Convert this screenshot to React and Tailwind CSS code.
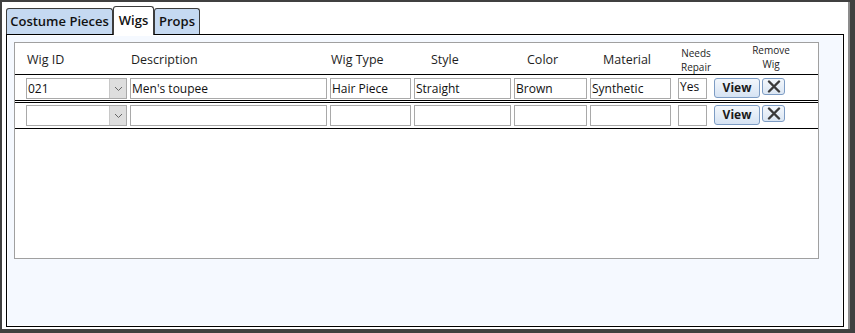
import React from "react";

const font = "font-['Open_Sans','Noto_Sans',sans-serif]";

function Field({ w, ml, value, top }) {
  return (
    <div
      className={`h-[21px] border border-[#a9a9a9] bg-white text-[12px] text-[#111] pl-[1px] overflow-hidden whitespace-nowrap ${
        top ? "leading-[15px]" : "leading-[19px]"
      }`}
      style={{ width: w, marginLeft: ml }}
    >
      {value}
    </div>
  );
}

function Combo({ value }) {
  return (
    <div className="flex h-[21px] w-[101px] border border-[#a9a9a9] bg-white">
      <div className="flex-1 pl-[1px] text-[12px] leading-[19px] text-[#111]">
        {value}
      </div>
      <div className="flex w-[17px] items-center justify-center border-l border-[#c8c8c8] bg-[#dedede]">
        <svg width="9" height="6" viewBox="0 0 9 6">
          <polyline
            points="1,1 4.5,4.5 8,1"
            fill="none"
            stroke="#666"
            strokeWidth="1"
          />
        </svg>
      </div>
    </div>
  );
}

function ViewButton() {
  return (
    <button
      type="button"
      className="ml-[7px] h-[20px] w-[46px] rounded-[3px] border border-[#7d9cc4] bg-gradient-to-b from-[#f3f7fc] to-[#d6e3f3] text-[12px] font-bold leading-[18px] text-[#1a1a1a]"
    >
      View
    </button>
  );
}

function RemoveButton() {
  return (
    <button
      type="button"
      className="ml-[2px] flex h-[17px] w-[23px] items-center justify-center self-start rounded-[3px] border border-[#7d9cc4] bg-gradient-to-b from-[#f3f7fc] to-[#dbe6f3]"
    >
      <svg width="14" height="13" viewBox="0 0 14 13">
        <path
          d="M2 1.5 L12 11.5 M12 1.5 L2 11.5"
          stroke="#3a3a3a"
          strokeWidth="2.4"
          strokeLinecap="round"
        />
      </svg>
    </button>
  );
}

function Row({ data, first }) {
  const d = data || {};
  return (
    <div
      className={`flex items-start pl-[11px] ${
        first
          ? "h-[26px] border-b border-black pt-[3px]"
          : "mt-px h-[27px] border-y border-black pt-[2px]"
      }`}
    >
      <Combo value={d.id} />
      <Field w={197} ml={3} value={d.desc} />
      <Field w={81} ml={3} value={d.type} />
      <Field w={97} ml={3} value={d.style} />
      <Field w={73} ml={3} value={d.color} />
      <Field w={81} ml={3} value={d.material} />
      <Field w={29} ml={7} value={d.repair} top />
      <ViewButton />
      <RemoveButton />
    </div>
  );
}

export default function App() {
  return (
    <div className={`h-[333px] w-[855px] bg-[#404040] pl-[2px] pr-[5px] pt-[2px] pb-[4px] ${font}`}>
      <div className="flex h-full flex-col border-r-2 border-[#8c8c8c] bg-white pl-[4px] pr-[4px] pt-[4px] pb-[2px]">
        <div className="flex h-[28px] items-end">
          <div className="h-[26px] w-[107px] rounded-t-[3px] border border-b-0 border-[#3c3c3c] bg-[#c5d9f1] text-center text-[13px] font-semibold leading-[24px] text-[#111]">
            Costume Pieces
          </div>
          <div className="relative z-10 -mb-px h-[29px] w-[41px] rounded-t-[3px] border border-b-0 border-[#3c3c3c] bg-white text-center text-[13px] font-semibold leading-[26px] text-[#111]">
            Wigs
          </div>
          <div className="h-[26px] w-[46px] rounded-t-[3px] border border-b-0 border-[#3c3c3c] bg-[#c5d9f1] text-center text-[13px] font-semibold leading-[24px] text-[#111]">
            Props
          </div>
        </div>
        <div className="w-[838px] flex-1 border border-black">
          <div className="h-full border border-white bg-[#f5f9ff] p-[6px]">
            <div className="h-[217px] w-[805px] border border-[#a0a0a0] bg-white">
              <div className="flex h-[32px] border-b border-black pl-[11px] text-[12.5px] text-[#1e1e1e]">
                <div className="w-[104px] pl-[1px] pt-[8px]">Wig ID</div>
                <div className="w-[200px] pl-[1px] pt-[8px]">Description</div>
                <div className="w-[84px] pl-[1px] pt-[8px]">Wig Type</div>
                <div className="w-[100px] pl-[17px] pt-[8px]">Style</div>
                <div className="w-[76px] pl-[13px] pt-[8px]">Color</div>
                <div className="w-[88px] pl-[13px] pt-[8px]">Material</div>
                <div className="w-[36px] pt-[3px] text-center text-[10px] leading-[14px]">
                  Needs
                  <br />
                  Repair
                </div>
                <div className="ml-[27px] w-[60px] text-center text-[10px] leading-[14px]">
                  Remove
                  <br />
                  Wig
                </div>
              </div>
              <Row
                first
                data={{
                  id: "021",
                  desc: "Men's toupee",
                  type: "Hair Piece",
                  style: "Straight",
                  color: "Brown",
                  material: "Synthetic",
                  repair: "Yes",
                }}
              />
              <Row />
            </div>
          </div>
        </div>
      </div>
    </div>
  );
}
